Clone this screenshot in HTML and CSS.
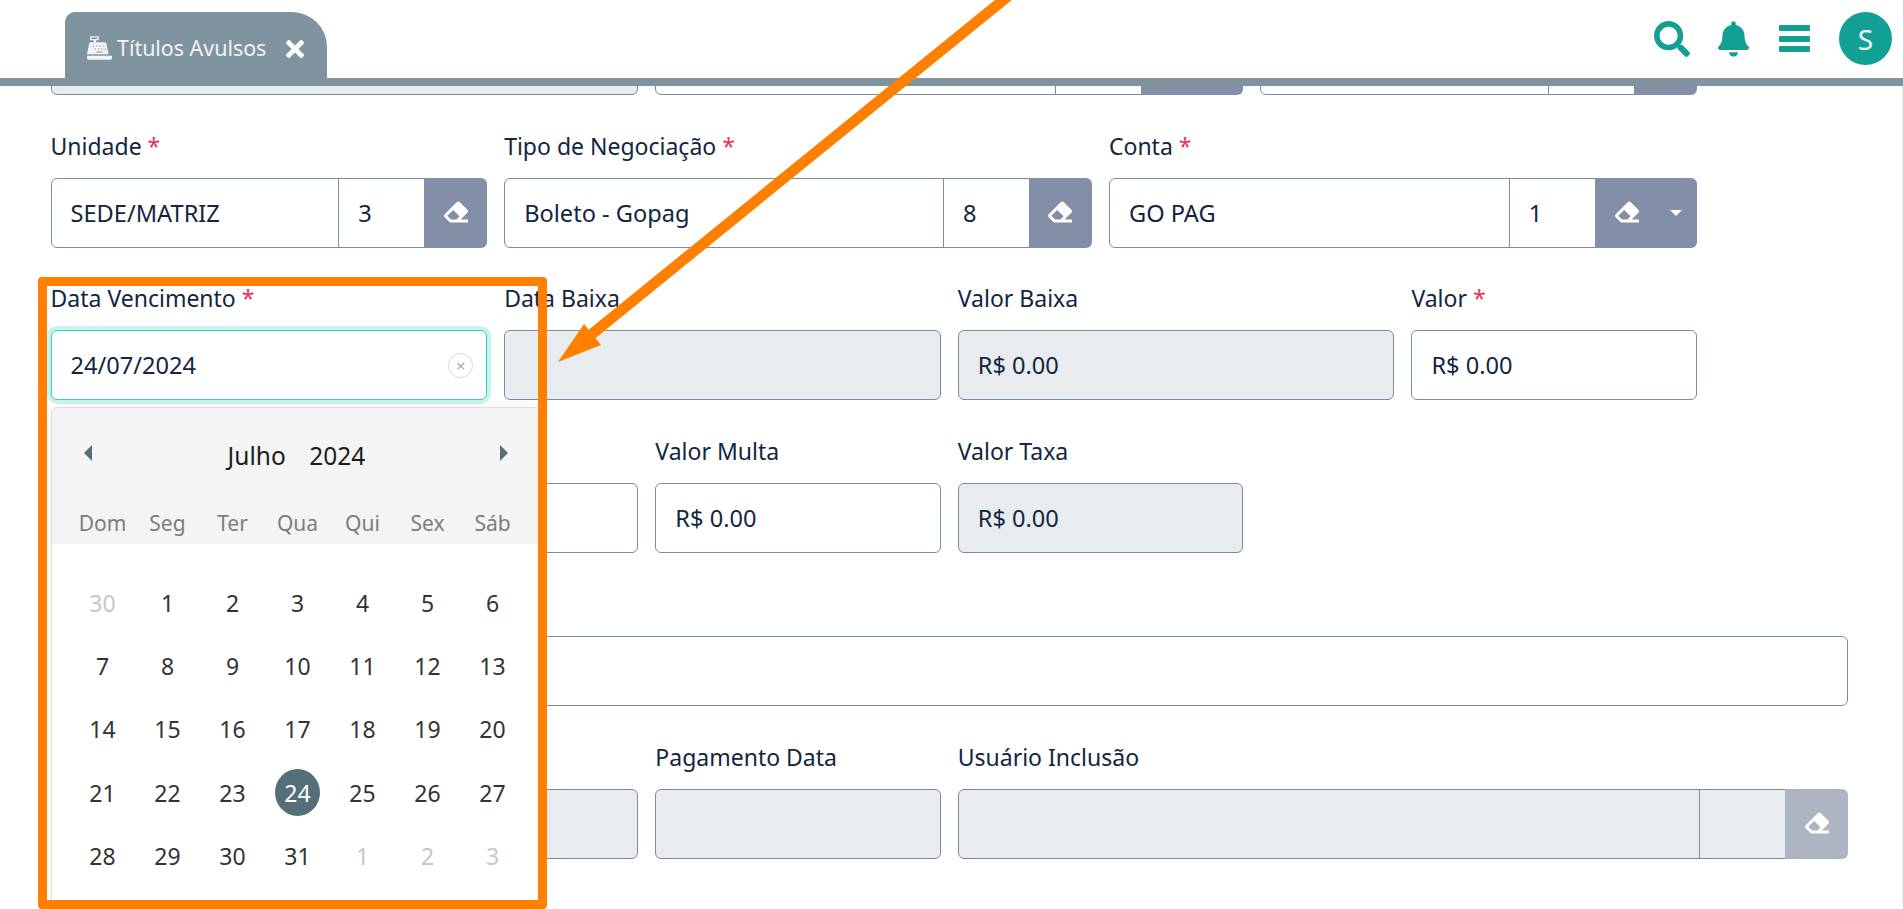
FILE: index.html
```html
<!DOCTYPE html>
<html lang="pt-BR">

<head>
    <meta charset="UTF-8">
    <meta name="viewport" content="width=device-width, initial-scale=1.0">
    <title>Títulos Avulsos</title>
    <link rel="stylesheet" href="styles.css">
</head>

<body>
    <svg class="icon-defs" width="0" height="0">
        <symbol id="i-eraser" viewBox="0 0 512 512"><path d="M497.941 273.941c18.745-18.745 18.745-49.137 0-67.882l-160-160c-18.745-18.745-49.137-18.745-67.882 0l-256 256c-18.745 18.745-18.745 49.137 0 67.882l96 96A48.004 48.004 0 0 0 144 480h356c6.627 0 12-5.373 12-12v-40c0-6.627-5.373-12-12-12H355.883l142.058-142.059zm-302.627-62.627l137.373 137.373L265.373 416H150.628l-80-80 124.686-124.686z"/></symbol>
    </svg>

    <header class="topbar">
        <div class="tab">
            <svg class="tab-icon" viewBox="0 0 512 512"><path d="M64 16h176v80h-56v40h176c22 0 34 12 38 30l44 220H-0l44-220c4-18 16-30 38-30h54V96H64zm32 24v32h112V40zM0 414h512v50c0 18-14 32-32 32H32c-18 0-32-14-32-32z"/><g fill="#7f949e"><rect x="120" y="205" width="26" height="22"/><rect x="190" y="205" width="26" height="22"/><rect x="260" y="205" width="26" height="22"/><rect x="330" y="205" width="26" height="22"/><rect x="155" y="265" width="26" height="22"/><rect x="225" y="265" width="26" height="22"/><rect x="295" y="265" width="26" height="22"/><rect x="365" y="265" width="26" height="22"/><rect x="190" y="328" width="130" height="20"/></g></svg>
            <span class="tab-title">Títulos Avulsos</span>
            <svg class="tab-close" viewBox="0 0 352 512"><path d="M242.72 256l100.07-100.07c12.28-12.28 12.28-32.19 0-44.48l-22.24-22.24c-12.28-12.28-32.19-12.28-44.48 0L176 189.28 75.93 89.21c-12.28-12.28-32.19-12.28-44.48 0L9.21 111.45c-12.28 12.28-12.28 32.19 0 44.48L109.28 256 9.21 356.07c-12.28 12.28-12.28 32.19 0 44.48l22.24 22.24c12.28 12.28 32.2 12.28 44.48 0L176 322.72l100.07 100.07c12.28 12.28 32.2 12.28 44.48 0l22.24-22.24c12.28-12.28 12.28-32.19 0-44.48L242.72 256z"/></svg>
        </div>
        <div class="actions">
            <svg class="act-search" viewBox="0 0 512 512"><path d="M505 442.7L405.3 343c-4.5-4.5-10.6-7-17-7H372c27.6-35.3 44-79.7 44-128C416 93.1 322.9 0 208 0S0 93.1 0 208s93.1 208 208 208c48.3 0 92.7-16.4 128-44v16.3c0 6.4 2.5 12.5 7 17l99.7 99.7c9.4 9.4 24.6 9.4 33.9 0l28.3-28.3c9.4-9.4 9.4-24.6.1-34zM208 336c-70.7 0-128-57.2-128-128 0-70.7 57.2-128 128-128 70.7 0 128 57.2 128 128 0 70.7-57.2 128-128 128z"/></svg>
            <svg class="act-bell" viewBox="0 0 448 512"><path d="M224 512c35.32 0 63.97-28.65 63.97-64H160.03c0 35.35 28.65 64 63.97 64zm215.39-149.71c-19.32-20.76-55.47-51.99-55.47-154.29 0-77.7-54.48-139.9-127.94-155.16V32c0-17.67-14.32-32-31.98-32s-31.98 14.33-31.98 32v20.84C118.56 68.1 64.08 130.3 64.08 208c0 102.3-36.15 133.53-55.47 154.29-6 6.45-8.66 14.16-8.61 21.71.11 16.4 12.98 32 32.1 32h383.8c19.12 0 32-15.6 32.1-32 .05-7.55-2.61-15.27-8.61-21.71z"/></svg>
            <div class="act-bars"><span></span><span></span><span></span></div>
            <div class="avatar">S</div>
        </div>
    </header>

    <main class="form">
        <div class="row row-cut">
            <div class="field span-4"><div class="control off"></div></div>
            <div class="field span-4">
                <div class="group">
                    <div class="control grow"></div>
                    <div class="control code"></div>
                    <button class="btn btn-split"></button>
                </div>
            </div>
            <div class="field span-3">
                <div class="group">
                    <div class="control grow"></div>
                    <div class="control code"></div>
                    <button class="btn"></button>
                </div>
            </div>
        </div>

        <div class="row">
            <div class="field span-3">
                <label>Unidade <i>*</i></label>
                <div class="group">
                    <div class="control grow">SEDE/MATRIZ</div>
                    <div class="control code">3</div>
                    <button class="btn"><svg class="eraser"><use href="#i-eraser"/></svg></button>
                </div>
            </div>
            <div class="field span-4">
                <label>Tipo de Negociação <i>*</i></label>
                <div class="group">
                    <div class="control grow">Boleto - Gopag</div>
                    <div class="control code">8</div>
                    <button class="btn"><svg class="eraser"><use href="#i-eraser"/></svg></button>
                </div>
            </div>
            <div class="field span-4">
                <label>Conta <i>*</i></label>
                <div class="group">
                    <div class="control grow">GO PAG</div>
                    <div class="control code">1</div>
                    <button class="btn btn-split"><svg class="eraser"><use href="#i-eraser"/></svg><b class="caret"></b></button>
                </div>
            </div>
        </div>

        <div class="row">
            <div class="field span-3">
                <label>Data Vencimento <i>*</i></label>
                <div class="control focus">24/07/2024<span class="clear">×</span></div>
            </div>
            <div class="field span-3">
                <label>Data Baixa</label>
                <div class="control off"></div>
            </div>
            <div class="field span-3">
                <label>Valor Baixa</label>
                <div class="control off">R$ 0.00</div>
            </div>
            <div class="field span-2">
                <label>Valor <i>*</i></label>
                <div class="control">R$ 0.00</div>
            </div>
        </div>

        <div class="row">
            <div class="field span-4">
                <label>&nbsp;</label>
                <div class="control"></div>
            </div>
            <div class="field span-2">
                <label>Valor Multa</label>
                <div class="control">R$ 0.00</div>
            </div>
            <div class="field span-2">
                <label>Valor Taxa</label>
                <div class="control off">R$ 0.00</div>
            </div>
        </div>

        <div class="row">
            <div class="field span-12">
                <label>&nbsp;</label>
                <div class="control"></div>
            </div>
        </div>

        <div class="row">
            <div class="field span-4">
                <label>&nbsp;</label>
                <div class="control off"></div>
            </div>
            <div class="field span-2">
                <label>Pagamento Data</label>
                <div class="control off"></div>
            </div>
            <div class="field span-6">
                <label>Usuário Inclusão</label>
                <div class="group">
                    <div class="control grow off"></div>
                    <div class="control code off"></div>
                    <button class="btn btn-off"><svg class="eraser"><use href="#i-eraser"/></svg></button>
                </div>
            </div>
        </div>
    </main>

    <div class="datepicker">
        <div class="dp-head">
            <div class="dp-nav">
                <b class="arrow arrow-left"></b>
                <span class="dp-title">Julho&nbsp;&nbsp; 2024</span>
                <b class="arrow arrow-right"></b>
            </div>
            <div class="dp-week">
                <span>Dom</span><span>Seg</span><span>Ter</span><span>Qua</span><span>Qui</span><span>Sex</span><span>Sáb</span>
            </div>
        </div>
        <div class="dp-days">
            <span class="out">30</span><span>1</span><span>2</span><span>3</span><span>4</span><span>5</span><span>6</span>
            <span>7</span><span>8</span><span>9</span><span>10</span><span>11</span><span>12</span><span>13</span>
            <span>14</span><span>15</span><span>16</span><span>17</span><span>18</span><span>19</span><span>20</span>
            <span>21</span><span>22</span><span>23</span><span class="sel"><em>24</em></span><span>25</span><span>26</span><span>27</span>
            <span>28</span><span>29</span><span>30</span><span>31</span><span class="out">1</span><span class="out">2</span><span class="out">3</span>
        </div>
    </div>

    <!-- marcacao laranja por cima do print -->
    <div class="mark-box"></div>
    <svg class="mark-arrow" viewBox="0 0 1903 909"><path d="M1028 -20L592 334" class="mark-line"/><path d="M558 362L584 324L601 345Z" class="mark-head"/></svg>
</body>

</html>
```

FILE: styles.css
```css
* {
    box-sizing: border-box;
}

html, body {
    height: 100%;
}

body {
    margin: 0;
    overflow: hidden;
    background: #fff;
    color: #12263f;
    font-family: "Noto Sans", Arial, sans-serif;
    font-size: 23px;
}

.icon-defs {
    position: absolute;
}

/* topo */
.topbar {
    position: relative;
    z-index: 2;
    display: flex;
    justify-content: space-between;
    height: 86px;
    padding: 12px 11px 0 65px;
    background: #fff;
    border-bottom: 8px solid #7f949e;
}

.tab {
    display: flex;
    align-items: center;
    width: 262px;
    height: 66px;
    padding: 5px 0 0 22px;
    background: #7f949e;
    border-radius: 10px 35px 0 0;
    color: #f1f3f4;
}

.tab-icon {
    width: 25px;
    height: 26px;
    fill: #f1f3f4;
}

.tab-title {
    margin-left: 5px;
    font-size: 21.4px;
}

.tab-close {
    width: 18px;
    height: 26px;
    margin: 3px 0 0 20px;
    fill: #fff;
}

.actions {
    display: flex;
    align-items: flex-start;
}

.act-search {
    width: 36px;
    height: 36px;
    margin-top: 9px;
    fill: #139f92;
}

.act-bell {
    width: 31px;
    height: 36px;
    margin: 9px 0 0 28px;
    fill: #139f92;
}

.act-bars {
    display: flex;
    flex-direction: column;
    gap: 4.5px;
    width: 31px;
    margin: 13px 0 0 30px;
}

.act-bars span {
    height: 6px;
    background: #139f92;
    border-radius: 1px;
}

.avatar {
    display: flex;
    align-items: center;
    justify-content: center;
    width: 53px;
    height: 53px;
    margin-left: 29px;
    background: #12a094;
    border-radius: 50%;
    color: #eef7f6;
    font-size: 28px;
}

/* formulario */
.form {
    height: 819px;
    padding: 0 53px 0 50.5px;
    border-right: 2px solid #f2f2f2;
    overflow: hidden;
}

.row {
    display: grid;
    grid-template-columns: repeat(12, 1fr);
    column-gap: 17px;
    height: 152.75px;
}

.row-cut {
    height: 8.6px;
    overflow: hidden;
}

.row-cut .field {
    margin-top: -61px;
}

.span-2 { grid-column: span 2; }
.span-3 { grid-column: span 3; }
.span-4 { grid-column: span 4; }
.span-6 { grid-column: span 6; }
.span-12 { grid-column: span 12; }

label {
    display: block;
    height: 83px;
    padding-top: 36px;
    line-height: 30px;
}

label i {
    color: #e63757;
    font-style: normal;
}

.control {
    display: flex;
    align-items: center;
    height: 70px;
    padding: 0 19px;
    background: #fff;
    border: 1px solid #7c8ba4;
    border-radius: 6px;
    font-size: 23.6px;
}

.off {
    background: #e9ecef;
}

.focus {
    position: relative;
    border-color: #2dd4bf;
    box-shadow: 0 0 0 4px #c8f4ef;
}

.clear {
    position: absolute;
    top: 22px;
    right: 13px;
    display: flex;
    align-items: center;
    justify-content: center;
    width: 25px;
    height: 25px;
    border: 1px solid #d6d9dc;
    border-radius: 50%;
    color: #a9b0b7;
    font-size: 17px;
}

.group {
    display: flex;
    height: 70px;
}

.group .control {
    border-radius: 0;
    margin-right: -1px;
}

.group .grow {
    flex: 1;
    border-radius: 6px 0 0 6px;
}

.code {
    width: 87px;
}

.btn {
    position: relative;
    display: flex;
    align-items: center;
    justify-content: center;
    width: 63px;
    padding: 0;
    background: #838fa6;
    border: 0;
    border-radius: 0 6px 6px 0;
}

.btn-split {
    width: 102px;
    justify-content: flex-start;
    padding-left: 20px;
}

.btn-off {
    background: #adb4c2;
}

.eraser {
    width: 24px;
    height: 24px;
    margin-top: -2px;
    fill: #fff;
}

.caret {
    width: 0;
    height: 0;
    margin-left: 31px;
    border-top: 6px solid #fff;
    border-left: 6.5px solid transparent;
    border-right: 6.5px solid transparent;
}

/* calendario */
.datepicker {
    position: absolute;
    top: 407px;
    left: 51px;
    width: 491px;
    height: 520px;
    background: #fff;
    border: 1px solid #dedede;
    border-radius: 6px;
    box-shadow: 0 2px 14px rgba(0, 0, 0, 0.06);
    overflow: hidden;
}

.dp-head {
    height: 136px;
    background: #f4f4f4;
}

.dp-nav {
    position: relative;
    height: 86px;
    padding-top: 30px;
    text-align: center;
    color: #1c1c1c;
    font-size: 24.5px;
    line-height: 36px;
    word-spacing: 1.5px;
}

.arrow {
    position: absolute;
    top: 37px;
    width: 0;
    height: 0;
    border-top: 8px solid transparent;
    border-bottom: 8px solid transparent;
}

.arrow-left {
    left: 32px;
    border-right: 8px solid #546e7a;
}

.arrow-right {
    right: 33px;
    border-left: 8px solid #546e7a;
}

.dp-week, .dp-days {
    display: grid;
    grid-template-columns: repeat(7, 65px);
    padding-left: 18px;
    text-align: center;
}

.dp-week {
    color: #7d7d7d;
    font-size: 21px;
    line-height: 30px;
    padding-top: 14px;
}

.dp-days {
    padding-top: 27px;
    grid-auto-rows: 63.4px;
    color: #333;
    font-size: 23px;
}

.dp-days span {
    display: flex;
    align-items: center;
    justify-content: center;
}

.dp-days .out {
    color: #c6c6c6;
}

.dp-days em {
    display: flex;
    align-items: center;
    justify-content: center;
    width: 45px;
    height: 47px;
    background: #546e7a;
    border-radius: 50%;
    color: #fff;
    font-style: normal;
}

/* marcacao */
.mark-box {
    position: absolute;
    top: 277px;
    left: 38px;
    width: 509px;
    height: 632px;
    border: 9px solid #ff7f00;
    border-radius: 4px;
}

.mark-arrow {
    position: absolute;
    top: 0;
    left: 0;
    z-index: 3;
    width: 1903px;
    height: 909px;
}

.mark-line {
    stroke: #ff7f00;
    stroke-width: 10.7;
    fill: none;
}

.mark-head {
    fill: #ff7f00;
}
```
